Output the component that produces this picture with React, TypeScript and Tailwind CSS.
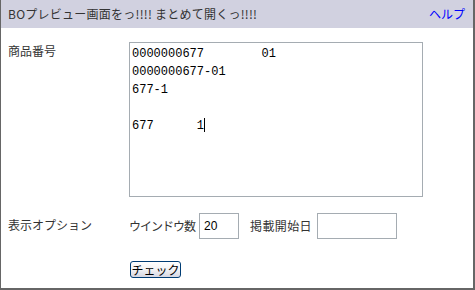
import React from "react";

const jp = { fontFamily: '"MS PGothic", "Noto Sans CJK JP", "Liberation Sans", sans-serif' };

export default function App() {
  return (
    <div
      className="w-[475px] h-[290px] bg-white border-l border-r-2 border-b-2 border-[#666666] flex flex-col text-[12px] text-[#333333]"
      style={jp}
    >
      <div className="h-[28px] bg-[#d1d1e0] flex items-center justify-between pl-[7px] pr-[8px] shrink-0">
        <span className="leading-none tracking-[0.25px]">BOプレビュー画面をっ!!!! まとめて開くっ!!!!</span>
        <span className="leading-none text-[#0000ff]">ヘルプ</span>
      </div>
      <div className="flex flex-col pt-[14px]">
        <div className="flex">
          <div className="w-[128px] pl-[7px] pt-[1px] leading-[16px]">商品番号</div>
          <div
            className="w-[294px] h-[155px] border border-[#a5acb2] px-[2px] pt-[2px] text-[12px] leading-[18px] whitespace-pre text-black"
            style={{ fontFamily: '"Liberation Mono", monospace' }}
          >
            {"0000000677        01\n0000000677-01\n677-1\n\n677      1"}
            <span className="inline-block w-px h-[14px] bg-black align-[-3px]" />
          </div>
        </div>
        <div className="flex items-center mt-[16px]">
          <div className="w-[128px] pl-[7px] self-start pt-[4px] leading-[16px]">表示オプション</div>
          <span className="mr-[4px] tracking-[-1px]">ウインドウ数</span>
          <div
            className="w-[40px] h-[26px] border border-[#a5acb2] flex items-center pl-[4px] text-black"
            style={{ fontFamily: '"Liberation Sans", Arial, sans-serif' }}
          >
            20
          </div>
          <span className="ml-[11px] mr-[5px] tracking-[0.4px]">掲載開始日</span>
          <div className="w-[80px] h-[26px] border border-[#a5acb2]" />
        </div>
        <div className="mt-[22px] pl-[129px]">
          <button
            className="w-[51px] h-[17px] rounded-[3px] border border-[#003c74] bg-gradient-to-b from-white via-[#f2f2f4] to-[#d6d6e2] text-black text-[12px] leading-none flex items-center justify-center"
            style={jp}
          >
            チェック
          </button>
        </div>
      </div>
    </div>
  );
}
